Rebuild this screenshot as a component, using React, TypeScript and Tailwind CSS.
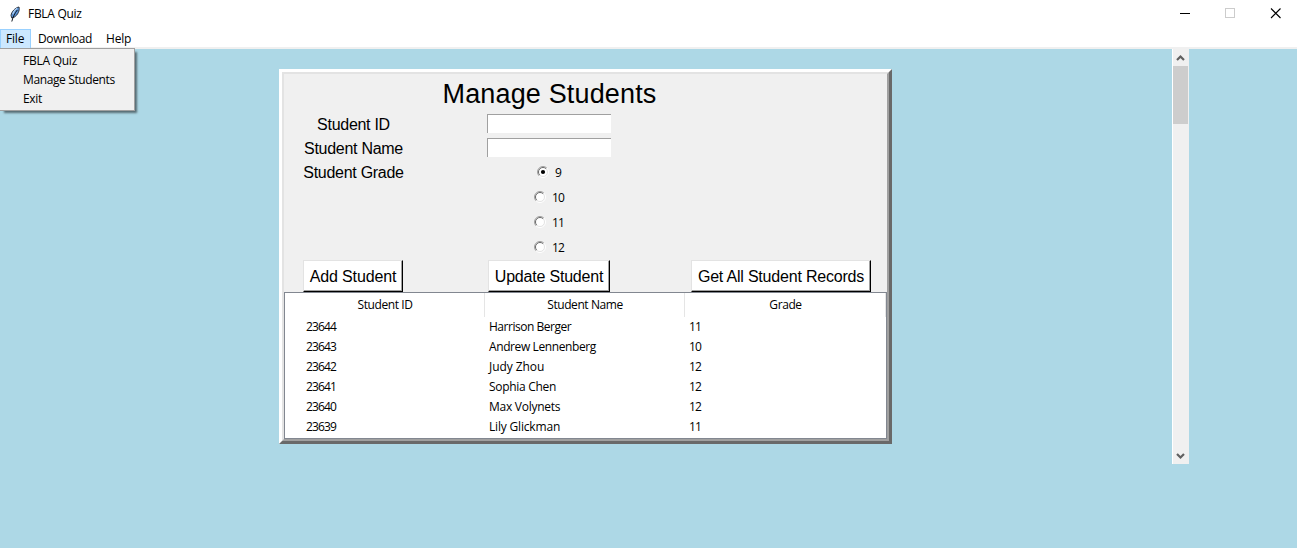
import React, { useState } from "react";

const students = [
  { id: "23644", name: "Harrison Berger", grade: "11", fit: "tracking-[-0.48px]" },
  { id: "23643", name: "Andrew Lennenberg", grade: "10", fit: "tracking-[-0.4px]" },
  { id: "23642", name: "Judy Zhou", grade: "12", fit: "tracking-[-0.06px]" },
  { id: "23641", name: "Sophia Chen", grade: "12", fit: "tracking-[-0.3px]" },
  { id: "23640", name: "Max Volynets", grade: "12", fit: "tracking-[-0.26px]" },
  { id: "23639", name: "Lily Glickman", grade: "11", fit: "tracking-[-0.18px]" },
];

function Feather() {
  return (
    <svg width="12" height="16" viewBox="0 0 12 16" className="-mt-[2px] shrink-0">
      <path d="M10 1C6.500 1.500 2.500 5.500 2 9.500L2.800 12l2.400-.8C8.800 9 11 4.500 10 1Z" fill="#5b93d6" stroke="#20262e" strokeWidth="0.900" />
      <path d="M3.800 8C4.500 5.500 6 3.500 8 2.300" fill="none" stroke="#b9d6f5" strokeWidth="1.200" />
      <path d="M8.300 4C6 7 4 10.500 2.800 15.500" fill="none" stroke="#111820" strokeWidth="1" />
    </svg>
  );
}

function TitleBar() {
  return (
    <div className="flex h-[29px] items-center bg-white pl-[9px]">
      <Feather />
      <span className="-mt-px ml-[7px] grow tracking-[-0.3px]">FBLA Quiz</span>
      <svg width="110" height="12" viewBox="0 0 110 12" shapeRendering="crispEdges" className="-mt-[3px] mr-[7px]">
        <path d="M0 6.500h10" stroke="#000" />
        <rect x="45.500" y="1.500" width="9" height="9" fill="none" stroke="#ccc" />
        <path d="M91 1.500 100.500 11M100.500 1.500 91 11" stroke="#000" strokeWidth="1.100" shapeRendering="auto" />
      </svg>
    </div>
  );
}

function MenuBar() {
  return (
    <div className="relative z-10 flex h-5 border-b-2 border-[#f0f0f0] bg-white">
      <div className="flex h-5 w-[31px] items-center border border-[#99d1ff] bg-[#cce8ff] pl-[5px]">
        <span className="tracking-[-0.2px]">File</span>
      </div>
      <div className="flex h-5 w-[68px] items-center pl-[7px] tracking-[-0.35px]">Download</div>
      <div className="flex h-5 items-center pl-[7px] tracking-[-0.2px]">Help</div>
      <div className="absolute left-0 top-[19px] flex h-[63px] w-[135px] flex-col border border-l-0 border-[#a0a0a0] bg-[#f0f0f0] pl-[23px] pt-[2px] leading-[19px] shadow-[3px_3px_2px_-1px_rgba(0,0,0,0.5)]">
        <span className="tracking-[-0.25px]">FBLA Quiz</span>
        <span className="tracking-[-0.38px]">Manage Students</span>
        <span className="tracking-[-0.3px]">Exit</span>
      </div>
    </div>
  );
}

function Radio({ value, on, onPick }: { value: string; on: boolean; onPick: () => void }) {
  return (
    <button onClick={onPick} className="flex h-[25px] w-full items-center justify-center gap-[6px] pl-px">
      <svg width="12" height="12" viewBox="0 0 12 12" className="-mt-[2px]">
        <circle cx="6" cy="6" r="5" fill="#fff" />
        <path d="M2.100 9.900A5.500 5.500 0 0 1 9.900 2.100" fill="none" stroke="#a0a0a0" />
        <path d="M2.800 9.200A4.500 4.500 0 0 1 9.200 2.800" fill="none" stroke="#696969" />
        <path d="M9.900 2.100A5.500 5.500 0 0 1 2.100 9.900" fill="none" stroke="#fff" />
        <path d="M9.200 2.800A4.500 4.500 0 0 1 2.800 9.200" fill="none" stroke="#e3e3e3" />
        {on && <circle cx="6" cy="6" r="2.100" fill="#000" />}
      </svg>
      <span className="mt-px tracking-[-0.8px]">{value}</span>
    </button>
  );
}

function Label({ children }: { children?: React.ReactNode }) {
  return (
    <div className="flex items-center justify-center pl-px pt-px font-['Liberation_Sans',sans-serif] text-[16px] tracking-[-0.28px]">
      {children}
    </div>
  );
}

function Entry() {
  return (
    <div className="flex items-start justify-center pt-[2px]">
      <input className="h-[19px] w-[124px] border-l border-t border-[#a0a0a0] bg-white px-1 outline-none" />
    </div>
  );
}

function RaisedButton({ children, size }: { children: React.ReactNode; size: string }) {
  return (
    <div className="flex justify-center">
      <button
        className={`${size} h-8 whitespace-nowrap border border-b-black border-l-[#e3e3e3] border-r-black border-t-[#e3e3e3] bg-white pt-px font-['Liberation_Sans',sans-serif] text-[16px] shadow-[inset_-1px_-1px_0_#a0a0a0]`}
      >
        {children}
      </button>
    </div>
  );
}

function Records() {
  return (
    <div className="h-[147px] border border-[#828790] bg-white">
      <div className="grid h-6 grid-cols-[200px_200px_201px]">
        {["Student ID", "Student Name", "Grade"].map((h) => (
          <div key={h} className="flex items-center justify-center border-r border-[#e5e5e5] pl-px tracking-[-0.42px]">
            {h}
          </div>
        ))}
      </div>
      {students.map((s) => (
        <div key={s.id} className="grid h-5 grid-cols-[200px_200px_201px] items-center">
          <span className="pl-[21px] tracking-[-0.86px]">{s.id}</span>
          <span className={`pl-1 ${s.fit}`}>{s.name}</span>
          <span className="pl-1 tracking-[-0.8px]">{s.grade}</span>
        </div>
      ))}
    </div>
  );
}

function StudentPanel() {
  const [grade, setGrade] = useState("9");
  return (
    <div className="ml-[279px] mt-5 h-[375px] w-[613px] border-[3px] border-b-[#696969] border-l-white border-r-[#696969] border-t-white">
      <div className="h-[369px] border-2 border-b-[#a0a0a0] border-l-[#e3e3e3] border-r-[#a0a0a0] border-t-[#e3e3e3] bg-[#f0f0f0]">
        <div className="grid grid-cols-[138px_253px_212px] grid-rows-[38px_24px_24px_25px_25px_25px_25px_32px]">
          <h1 className="col-start-2 flex items-center justify-center whitespace-nowrap pl-[2px] pt-[2px] font-['Liberation_Sans',sans-serif] text-[27px] tracking-[0.15px]">
            Manage Students
          </h1>
          <span />
          <Label>Student ID</Label>
          <Entry />
          <span />
          <Label>Student Name</Label>
          <Entry />
          <span />
          <Label>Student Grade</Label>
          {["9", "10", "11", "12"].map((g) => (
            <div key={g} className="col-start-2">
              <Radio value={g} on={grade === g} onPick={() => setGrade(g)} />
            </div>
          ))}
          <div className="col-start-1">
            <RaisedButton size="w-[100px] tracking-[-0.15px]">Add Student</RaisedButton>
          </div>
          <RaisedButton size="w-[122px] tracking-[-0.2px] pl-px">Update Student</RaisedButton>
          <RaisedButton size="w-[180px] tracking-[-0.2px]">Get All Student Records</RaisedButton>
        </div>
        <Records />
      </div>
    </div>
  );
}

function Scrollbar() {
  return (
    <div className="mr-[108px] flex h-[415px] w-[17px] flex-col items-center border-l border-white bg-[#f0f0f0]">
      <svg width="16" height="17" viewBox="0 0 16 17">
        <path d="M4 11 7.500 7.500 11 11" fill="none" stroke="#606060" strokeWidth="2.200" />
      </svg>
      <div className="mr-px h-[58px] w-[15px] bg-[#cdcdcd]" />
      <div className="grow" />
      <svg width="16" height="17" viewBox="0 0 16 17">
        <path d="M4 7 7.500 10.500 11 7" fill="none" stroke="#606060" strokeWidth="2.200" />
      </svg>
    </div>
  );
}

export default function App() {
  return (
    <div className="flex h-[548px] w-[1297px] flex-col overflow-hidden bg-[#add8e6] font-['Open_Sans','Noto_Sans',sans-serif] text-[12px] leading-4 text-black">
      <TitleBar />
      <MenuBar />
      <div className="flex grow items-start justify-between">
        <StudentPanel />
        <Scrollbar />
      </div>
    </div>
  );
}
